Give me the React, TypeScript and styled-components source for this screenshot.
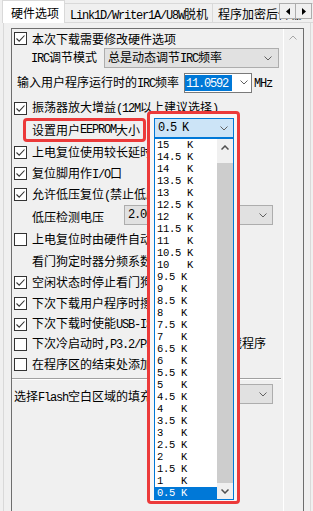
import React from 'react';
import styled, { createGlobalStyle } from 'styled-components';

const GlobalStyle = createGlobalStyle`
  html, body {
    margin: 0;
    padding: 0;
    background: #f0f0f0;
  }
  body {
    font-family: "Noto Sans CJK SC", "Liberation Sans", sans-serif;
    font-size: 12px;
    color: #000;
  }
`;

// half-width latin runs, SimSun-like 6px advance
const Lat = styled.span`
  font-family: "Liberation Mono", monospace;
  font-size: 12px;
  letter-spacing: -1.2px;
`;

const mix = (s: string) =>
  s
    .split(/([\x20-\x7e]+)/)
    .filter(Boolean)
    .map((part, i) =>
      /^[\x20-\x7e]+$/.test(part) ? (
        <Lat key={i}>{part}</Lat>
      ) : (
        <React.Fragment key={i}>{part}</React.Fragment>
      )
    );

const Window = styled.div`
  position: relative;
  width: 313px;
  height: 511px;
  overflow: hidden;
  display: flex;
  flex-direction: column;
`;

const TabStrip = styled.div`
  position: relative;
  z-index: 1;
  display: flex;
  align-items: flex-end;
  height: 23px;
  padding-left: 2px;
  margin-bottom: -1px;
  white-space: nowrap;
`;

const Tab = styled.div<{ $active?: boolean; $w: number }>`
  flex: none;
  box-sizing: border-box;
  width: ${(p) => p.$w}px;
  height: ${(p) => (p.$active ? 23 : 20)}px;
  padding: ${(p) => (p.$active ? '3px 0 0 8px' : '1px 0 0 5px')};
  margin-right: -1px;
  border: 1px solid #d9d9d9;
  border-bottom: ${(p) => (p.$active ? 'none' : '1px solid #d9d9d9')};
  background: ${(p) => (p.$active ? '#ffffff' : '#f0f0f0')};
  overflow: hidden;
  line-height: 17px;
`;

const TabArrows = styled.div`
  position: absolute;
  right: 1px;
  top: 3px;
  display: flex;
`;

const ArrowBtn = styled.div`
  width: 17px;
  height: 16px;
  box-sizing: border-box;
  border: 1px solid #adadad;
  margin-left: -1px;
  background: #f0f0f0;
  display: flex;
  align-items: center;
  justify-content: center;
`;

const TabPage = styled.div`
  flex: 1;
  margin: 0 2px 0 3px;
  border: 1px solid #d9d9d9;
  background: #f0f0f0;
  padding: 5px 0 0 7px;
`;

const Group = styled.div`
  display: flex;
  width: 293px;
  height: 500px;
  box-sizing: border-box;
  border: 1px solid #6e6e6e;
  background: #f0f0f0;
`;

const Content = styled.div`
  flex: 1;
  min-width: 0;
  display: flex;
  flex-direction: column;
  overflow: hidden;
`;

const VScroll = styled.div`
  flex: none;
  width: 20px;
  box-sizing: border-box;
  border-left: 1px solid #ffffff;
  display: flex;
  justify-content: center;
  padding: 6px 2px 0 0;
`;

const Row = styled.div<{ $h: number; $pl?: number; $pr?: number; $top?: boolean }>`
  flex: none;
  display: flex;
  align-items: ${(p) => (p.$top ? 'flex-start' : 'center')};
  height: ${(p) => p.$h}px;
  box-sizing: border-box;
  padding-left: ${(p) => p.$pl ?? 2}px;
  padding-right: ${(p) => p.$pr ?? 0}px;
  white-space: nowrap;
  line-height: 16px;
`;

const Box = styled.span`
  flex: none;
  width: 13px;
  height: 13px;
  box-sizing: border-box;
  border: 1px solid #333333;
  background: #ffffff;
  margin-right: 5px;
  display: flex;
  align-items: center;
  justify-content: center;
`;

const Text = styled.span<{ $top?: number }>`
  margin-top: ${(p) => p.$top ?? 0}px;
`;

const Combo = styled.div<{ $w: number; $edit?: boolean; $top?: number; $pr?: number }>`
  flex: none;
  margin-left: auto;
  margin-top: ${(p) => p.$top ?? 0}px;
  width: ${(p) => p.$w}px;
  height: 20px;
  box-sizing: border-box;
  border: 1px solid ${(p) => (p.$edit ? '#7a7a7a' : '#adadad')};
  background: ${(p) => (p.$edit ? '#ffffff' : '#e1e1e1')};
  display: flex;
  align-items: center;
  justify-content: space-between;
  padding: 0 ${(p) => p.$pr ?? 6}px 0 ${(p) => (p.$edit ? 0 : 3)}px;
`;

const Selected = styled.span`
  background: #0078d7;
  color: #ffffff;
  padding: 0 4px 0 1px;
  line-height: 14px;
`;

const Unit = styled.span`
  margin-left: 2px;
`;

const Marked = styled.span`
  display: inline-flex;
  align-items: center;
  height: 24px;
  box-sizing: border-box;
  margin-left: 9px;
  padding: 0 3px 0 6px;
  border: 3px solid #ec3a3a;
  border-radius: 4px;
`;

const Sep = styled.div`
  flex: none;
  margin: 4px 2px 0 0;
  border-top: 1px solid #a0a0a0;
  border-bottom: 1px solid #ffffff;
`;

/* popup list of the EEPROM combo, with the red callout round it */
const Callout = styled.div`
  position: absolute;
  left: 147px;
  top: 111px;
  z-index: 2;
  width: 93px;
  height: 393px;
  box-sizing: border-box;
  border: 3px solid #ec3a3a;
  border-radius: 4px;
  background: #f7f7f7;
  padding: 4px 3px 1px 4px;
  display: flex;
  flex-direction: column;
`;

const DropHead = styled.div`
  flex: none;
  height: 20px;
  box-sizing: border-box;
  border: 1px solid #0078d7;
  background: #cce4f7;
  display: flex;
  align-items: center;
  justify-content: space-between;
  padding: 0 5px 0 3px;
`;

const List = styled.div`
  flex: 1;
  display: flex;
  border: 1px solid #0078d7;
  background: #ffffff;
`;

const Items = styled.div`
  flex: 1;
  display: flex;
  flex-direction: column;
`;

const Item = styled.div<{ $sel?: boolean }>`
  height: 12px;
  line-height: 12px;
  padding-left: 2px;
  white-space: pre;
  background: ${(p) => (p.$sel ? '#0078d7' : 'transparent')};
  color: ${(p) => (p.$sel ? '#ffffff' : '#000000')};
  font-family: "Liberation Mono", monospace;
  font-size: 10.5px;
  letter-spacing: -0.3px;
`;

const ListScroll = styled.div`
  flex: none;
  width: 16px;
  display: flex;
  flex-direction: column;
  background: #f0f0f0;
`;

const ScrollBtn = styled.div`
  flex: none;
  height: 16px;
  display: flex;
  align-items: center;
  justify-content: center;
`;

const Thumb = styled.div`
  flex: 1;
  margin-top: 8px;
  background: #cdcdcd;
`;

const Chevron = ({ up = false, color = '#606060', w = 1 }: { up?: boolean; color?: string; w?: number }) => (
  <svg width="8" height="5" viewBox="0 0 8 5">
    <path
      d={up ? 'M0.5 4.5 L4 1 L7.5 4.5' : 'M0.5 0.5 L4 4 L7.5 0.5'}
      fill="none"
      stroke={color}
      strokeWidth={w}
    />
  </svg>
);

const Tick = () => (
  <svg width="11" height="11" viewBox="0 0 11 11">
    <path d="M1.5 5.5 L4.2 8.2 L9.5 2.5" fill="none" stroke="#333" strokeWidth="1.1" />
  </svg>
);

const Tri = ({ left }: { left?: boolean }) => (
  <svg width="4" height="7" viewBox="0 0 4 7">
    <path d={left ? 'M4 0 L0 3.5 L4 7 Z' : 'M0 0 L4 3.5 L0 7 Z'} fill="#000" />
  </svg>
);

const Check = ({ on, text, h }: { on: boolean; text: string; h: number }) => (
  <Row $h={h}>
    <Box>{on && <Tick />}</Box>
    <Text>{mix(text)}</Text>
  </Row>
);

const sizes: string[] = [];
for (let v = 30; v >= 1; v--) {
  const whole = Math.floor(v / 2);
  sizes.push(`${whole}${v % 2 ? '.5' : '  '} K`);
}

export default function App() {
  return (
    <>
      <GlobalStyle />
      <Window>
        <TabStrip>
          <Tab $active $w={63}>硬件选项</Tab>
          <Tab $w={149}>{mix('Link1D/Writer1A/U8W脱机')}</Tab>
          <Tab $w={120}>程序加密后传输</Tab>
          <TabArrows>
            <ArrowBtn>
              <Tri left />
            </ArrowBtn>
            <ArrowBtn>
              <Tri />
            </ArrowBtn>
          </TabArrows>
        </TabStrip>

        <TabPage>
          <Group>
            <Content>
              <Check h={19} on text="本次下载需要修改硬件选项" />
              <Row $h={20} $pl={19} $pr={4}>
                <Text>{mix('IRC调节模式')}</Text>
                <Combo $w={175}>
                  <span>{mix('总是动态调节IRC频率')}</span>
                  <Chevron />
                </Combo>
              </Row>
              <Row $h={29} $pl={5} $pr={11}>
                <Text>{mix('输入用户程序运行时的IRC频率')}</Text>
                <Combo $w={68} $edit $pr={3}>
                  <Selected>
                    <Lat>11.0592</Lat>
                  </Selected>
                  <Chevron />
                </Combo>
                <Unit>
                  <Lat>MHz</Lat>
                </Unit>
              </Row>
              <Check h={22} on text="振荡器放大增益(12M以上建议选择)" />
              <Row $h={22} $pl={2}>
                <Marked>{mix('设置用户EEPROM大小')}</Marked>
              </Row>
              <Check h={22} on text="上电复位使用较长延时" />
              <Check h={21} on text="复位脚用作I/O口" />
              <Check h={21} on text="允许低压复位(禁止低压中断)" />
              <Row $h={23} $pl={20} $pr={10}>
                <Text>低压检测电压</Text>
                <Combo $w={149} $top={-3} $pr={5}>
                  <Lat>2.00V</Lat>
                  <Chevron />
                </Combo>
              </Row>
              <Check h={22} on={false} text="上电复位时由硬件自动启动看门狗" />
              <Row $h={21} $pl={20}>
                <Text>看门狗定时器分频系数</Text>
              </Row>
              <Check h={22} on text="空闲状态时停止看门狗计数" />
              <Check h={21} on text="下次下载用户程序时擦除用户EEPROM区" />
              <Check h={20} on text="下次下载时使能USB-ISP功能" />
              <Check h={20} on={false} text="下次冷启动时,P3.2/P3.3为0/0才可下载程序" />
              <Check h={20} on={false} text="在程序区的结束处添加重要测试参数" />
              <Sep />
              <Row $h={32} $pl={2} $pr={10} $top>
                <Text $top={8}>{mix('选择Flash空白区域的填充值')}</Text>
                <Combo $w={80} $top={4} $pr={5}>
                  <Lat>FF</Lat>
                  <Chevron />
                </Combo>
              </Row>
            </Content>
            <VScroll>
              <Chevron up color="#a6a6a6" />
            </VScroll>
          </Group>
        </TabPage>

        <Callout>
          <DropHead>
            <Lat>0.5 K</Lat>
            <Chevron />
          </DropHead>
          <List>
            <Items>
              {sizes.map((s, i) => (
                <Item key={s} $sel={i === sizes.length - 1}>
                  {s}
                </Item>
              ))}
            </Items>
            <ListScroll>
              <ScrollBtn>
                <Chevron up color="#505050" w={1.5} />
              </ScrollBtn>
              <Thumb />
              <ScrollBtn>
                <Chevron color="#505050" w={1.5} />
              </ScrollBtn>
            </ListScroll>
          </List>
        </Callout>
      </Window>
    </>
  );
}
